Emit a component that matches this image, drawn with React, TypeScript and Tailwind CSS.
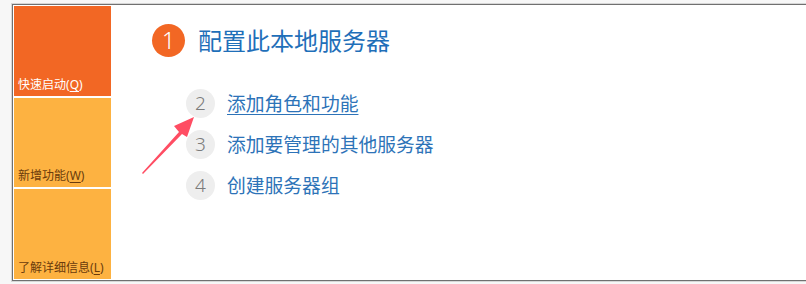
import React from "react";

const font = { fontFamily: '"Noto Sans", "Noto Sans CJK SC", sans-serif' };

function Tile({ bg, color, label, hot }: { bg: string; color: string; label: string; hot: string }) {
  return (
    <div className={`flex-1 flex items-end pl-[4px] pb-[3px] ${bg} ${color}`}>
      <span className="text-[12px] leading-[16px]">
        {label}(<span className="underline underline-offset-2">{hot}</span>)
      </span>
    </div>
  );
}

function Step({ n, text, underline }: { n: string; text: string; underline?: boolean }) {
  return (
    <div className="flex items-center h-[29px]">
      <div className="w-[29px] h-[29px] rounded-full bg-[#eeeeee] flex items-center justify-center text-[19px] text-[#7b7b7b] font-light">
        {n}
      </div>
      <span
        className={`ml-[12px] text-[18.8px] leading-[24px] text-[#2d73b8] ${underline ? "underline underline-offset-[3px] decoration-1" : ""}`}
      >
        {text}
      </span>
    </div>
  );
}

export default function App() {
  return (
    <div className="w-[806px] h-[284px] bg-[#f7f7f7] pt-[3px] pl-[11px] overflow-hidden" style={font}>
      <div className="h-[279px] border border-r-0 border-[#d6d6d6]">
        <div className="h-full border border-r-0 border-[#707070] bg-white flex relative">
          <div className="w-[99px] p-[1px] flex flex-col gap-[2px]">
            <Tile bg="bg-[#f26724]" color="text-white" label="快速启动" hot="Q" />
            <Tile bg="bg-[#fdb241]" color="text-[#6a3b0c]" label="新增功能" hot="W" />
            <Tile bg="bg-[#fdb241]" color="text-[#6a3b0c]" label="了解详细信息" hot="L" />
          </div>
          <div className="flex-1 pl-[40px] pt-[19px]">
            <div className="flex items-center">
              <div className="w-[33px] h-[33px] rounded-full bg-[#f26724] flex items-center justify-center text-white text-[23px] font-light">
                1
              </div>
              <span className="ml-[13px] text-[24px] leading-[30px] text-[#1f6fb9]">配置此本地服务器</span>
            </div>
            <div className="pl-[34px] mt-[32px] flex flex-col gap-[12px]">
              <Step n="2" text="添加角色和功能" underline />
              <Step n="3" text="添加要管理的其他服务器" />
              <Step n="4" text="创建服务器组" />
            </div>
          </div>
          <svg className="absolute left-0 top-0" width="300" height="280" viewBox="0 0 300 280">
            <polygon
              points="129,168 166,127 161,121 181,112 174,132 169,129 130,169"
              fill="#ff4d63"
            />
          </svg>
        </div>
      </div>
    </div>
  );
}
